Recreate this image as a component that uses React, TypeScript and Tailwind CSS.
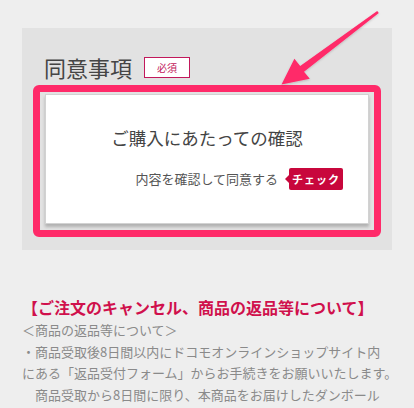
import React from 'react'

const jp = { fontFamily: '"Noto Sans CJK JP", "Noto Sans", sans-serif' }

function Arrow() {
  // tapered pink pointer from the top right corner down to the highlighted box
  return (
    <svg
      className="pointer-events-none absolute left-0 top-0"
      width="414"
      height="408"
      viewBox="0 0 414 408"
    >
      <defs>
        <filter id="arrowShadow" x="-20%" y="-20%" width="140%" height="140%">
          <feDropShadow dx="0" dy="1" stdDeviation="1" floodColor="#000" floodOpacity="0.18" />
        </filter>
      </defs>
      <polygon
        points="377.2,11 300.2,66 294.4,58.8 281.5,84.5 309.8,78.8 304,71.8 378.8,13"
        fill="#ff2a69"
        filter="url(#arrowShadow)"
      />
    </svg>
  )
}

export default function App() {
  return (
    <div className="relative min-h-screen overflow-hidden bg-[#eeeeee] pt-[28px]" style={jp}>
      <div className="ml-[22px] h-[222px] w-[370px] bg-[#e2e2e2] px-[11px] pt-[24px]">
        <div className="flex h-[30px] items-center gap-[12px] pl-[11px]">
          <span className="text-[22px] leading-[30px] text-[#454545]">同意事項</span>
          <span className="flex h-[21px] w-[46px] items-center justify-center border border-[#c2185b] bg-white text-[10px] text-[#c2185b]">
            必須
          </span>
        </div>

        <div className="mt-[3px] h-[152px] rounded-[6px] border-[7px] border-[#ff2a69] px-[5px] pb-[6px] pt-[2px]">
          <div className="h-full border border-[#d2d2d2] bg-white shadow-[0_3px_3px_rgba(0,0,0,0.22)]">
            <div className="pt-[32px] text-center text-[17.5px] leading-[22px] text-[#444444]">
              ご購入にあたっての確認
            </div>
            <div className="mt-[19px] flex items-center justify-end pr-[25px]">
              <span className="text-[13px] leading-[22px] text-[#555555]">内容を確認して同意する</span>
              <span className="ml-[7px] h-0 w-0 border-y-[4px] border-r-[4px] border-y-transparent border-r-[#c8073c]" />
              <span className="flex h-[22px] w-[54px] items-center justify-center rounded-[2px] bg-[#c8073c] text-[11px] font-bold tracking-[1px] text-white">
                チェック
              </span>
            </div>
          </div>
        </div>
      </div>

      <div className="px-[22px] pt-[45px]">
        <div className="whitespace-nowrap text-[16px] font-bold leading-[24px] text-[#d0104c]">
          【ご注文のキャンセル、商品の返品等について】
        </div>
        <div className="text-[13px] leading-[21.5px] text-[#8a8a8a]">
          <div className="whitespace-nowrap">＜商品の返品等について＞</div>
          <div className="whitespace-nowrap">・商品受取後8日間以内にドコモオンラインショップサイト内</div>
          <div className="whitespace-nowrap">にある「返品受付フォーム」からお手続きをお願いいたします。</div>
          <div className="whitespace-nowrap">　商品受取から8日間に限り、本商品をお届けしたダンボール</div>
        </div>
      </div>

      <Arrow />
    </div>
  )
}
